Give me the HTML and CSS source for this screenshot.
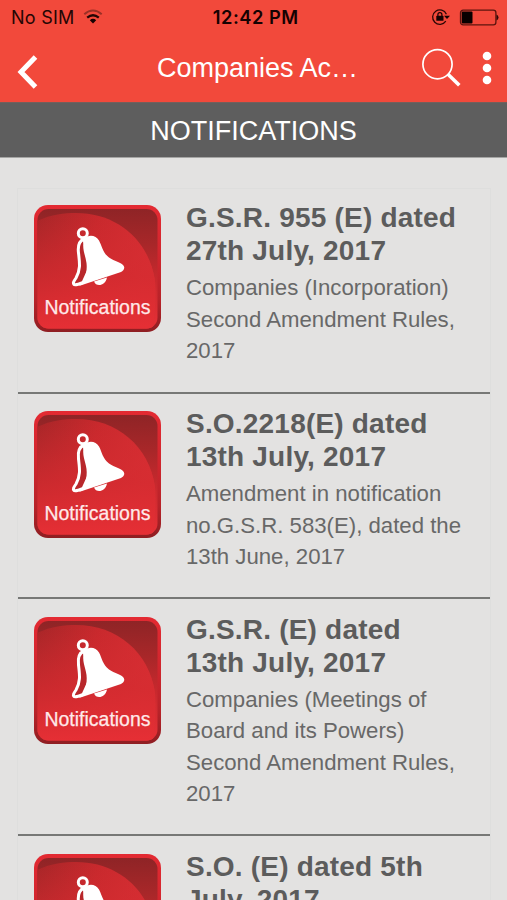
FILE: index.html
```html
<!DOCTYPE html>
<html lang="en">
<head>
<meta charset="utf-8">
<title>Notifications</title>
<link rel="stylesheet" href="styles.css">
</head>
<body>
<svg class="defs" width="0" height="0" aria-hidden="true">
  <defs>
    <linearGradient id="tile" x1="0" y1="0" x2="0" y2="1">
      <stop offset="0" stop-color="#8e2426"/>
      <stop offset=".3" stop-color="#a82729"/>
      <stop offset=".6" stop-color="#c9292e"/>
      <stop offset="1" stop-color="#e63036"/>
    </linearGradient>
    <linearGradient id="glow" x1="0" y1="0" x2="1" y2=".25">
      <stop offset="0" stop-color="#a62628"/>
      <stop offset=".5" stop-color="#c8292d"/>
      <stop offset="1" stop-color="#d62f34"/>
    </linearGradient>
    <linearGradient id="fade" x1="0" y1="0" x2="0" y2="1">
      <stop offset="0" stop-color="#d62b30" stop-opacity="0"/>
      <stop offset=".55" stop-color="#d62b30" stop-opacity=".7"/>
      <stop offset="1" stop-color="#e62f35" stop-opacity="1"/>
    </linearGradient>
    <linearGradient id="rim" x1="0" y1="0" x2="0" y2="1">
      <stop offset="0" stop-color="#e32a32"/>
      <stop offset=".35" stop-color="#d3262e"/>
      <stop offset=".75" stop-color="#b82329"/>
      <stop offset="1" stop-color="#8f1e22"/>
    </linearGradient>
    <clipPath id="inner"><rect x="3.5" y="4" width="120" height="119.5" rx="11"/></clipPath>
    <symbol id="bell" viewBox="0 0 127 127">
      <rect width="127" height="127" rx="14" fill="url(#rim)"/>
      <g clip-path="url(#inner)">
        <rect x="3" y="3" width="121" height="121" fill="url(#tile)"/>
        <path d="M3 16C18 9 30 8 42 8C83 8 115 35 121 76C122 92 121 108 119 124H3Z" fill="url(#glow)"/>
        <path d="M3 16C18 9 30 8 42 8C83 8 115 35 121 76C122 92 121 108 119 124H3Z" fill="url(#fade)"/>
      </g>
      <circle cx="48.8" cy="28.3" r="4.5" fill="none" stroke="#fff" stroke-width="3"/>
      <path d="M60 76.500C62 82 71 81.500 73 72.500Z" fill="#fff"/>
      <path d="M50 34C45 36 43.500 40 44.500 48C45.500 57 47 64 42 73C40 76 38.500 78 40 79.500C41.500 80.500 44 79.500 49 77.500L57 60Z" fill="#b8272b" stroke="#fff" stroke-width="3" stroke-linejoin="round"/>
      <path d="M50 34C55 28.500 62 30.500 65 35.500C68 41 68.500 47.500 75 52.500C80 56 89 58 90 61.500C91 64 89 66 87 67L45 81C51 75 53.500 67 52.500 58C51.500 50 47.500 44 50 34Z" fill="#fff"/>
      <text class="tile-label" x="63.500" y="108.500" text-anchor="middle" textLength="106" lengthAdjust="spacingAndGlyphs">Notifications</text>
    </symbol>
  </defs>
</svg>
<div class="screen">
  <header class="top">
    <div class="status">
      <div class="carrier"><span>No SIM</span>
        <svg width="20" height="16" viewBox="0 0 20 16" fill="none">
          <path d="M1.300 5.200Q10-2.200 18.700 5.200" stroke="#9b3026" stroke-width="2"/>
          <path d="M4.200 8.600Q10 3.800 15.800 8.600" stroke="#240604" stroke-width="2.300"/>
          <path d="M6.800 11.200Q10 8.500 13.200 11.200L10 14.600Z" fill="#160202"/>
        </svg>
      </div>
      <div class="clock">12:42 PM</div>
      <div class="indicators">
        <svg width="20" height="18" viewBox="0 0 20 18" fill="none">
          <path d="M14.800 13.200A7.200 7.200 0 1 1 15.400 6.200" stroke="#2d0705" stroke-width="1.300"/>
          <path d="M13 7.800H19L16 11Z" fill="#160202"/>
          <rect x="5.300" y="7.800" width="7.200" height="5" rx=".6" fill="#160202"/>
          <path d="M6.900 8V6.600a2 2 0 0 1 4 0V8" stroke="#160202" stroke-width="1.200"/>
        </svg>
        <svg width="40" height="17" viewBox="0 0 40 17" fill="none">
          <rect x="1.500" y="1.200" width="35.400" height="14.600" rx="2.600" stroke="#5c140e" stroke-width="1.300"/>
          <rect x="2.700" y="2.600" width="10.800" height="11.800" rx="1" fill="#080000"/>
          <path d="M37.500 5.400q2 1 2 3.100t-2 3.100Z" fill="#2d0705"/>
        </svg>
      </div>
    </div>
    <div class="nav">
      <svg class="back" width="22" height="36" viewBox="0 0 22 36" fill="none"><path d="M19.500 3L5 18L19.500 33" stroke="#fff" stroke-width="5"/></svg>
      <h1>Companies Ac…</h1>
      <div class="actions">
        <svg width="40" height="40" viewBox="0 0 40 40" fill="none" stroke="#fff">
          <circle cx="16.500" cy="16.200" r="14.600" stroke-width="1.700"/>
          <path d="M26.700 26L38.300 37.200" stroke-width="3.600"/>
        </svg>
        <svg width="10" height="34" viewBox="0 0 10 34" fill="#fff"><circle cx="5" cy="5" r="4.300"/><circle cx="5" cy="17" r="4.300"/><circle cx="5" cy="29" r="4.300"/></svg>
      </div>
    </div>
  </header>
  <div class="section">NOTIFICATIONS</div>
  <main class="list">
    <article class="item">
      <svg class="tile"><use href="#bell"/></svg>
      <div><h2>G.S.R. 955 (E) dated<br>27th July, 2017</h2>
      <p>Companies (Incorporation)<br>Second Amendment Rules,<br>2017</p></div>
    </article>
    <article class="item">
      <svg class="tile"><use href="#bell"/></svg>
      <div><h2>S.O.2218(E) dated<br>13th July, 2017</h2>
      <p>Amendment in notification<br>no.G.S.R. 583(E), dated the<br>13th June, 2017</p></div>
    </article>
    <article class="item">
      <svg class="tile"><use href="#bell"/></svg>
      <div><h2>G.S.R. (E) dated<br>13th July, 2017</h2>
      <p>Companies (Meetings of<br>Board and its Powers)<br>Second Amendment Rules,<br>2017</p></div>
    </article>
    <article class="item">
      <svg class="tile"><use href="#bell"/></svg>
      <div><h2>S.O. (E) dated 5th<br>July, 2017</h2></div>
    </article>
  </main>
</div>
</body>
</html>
```
FILE: styles.css
```css
* { box-sizing: border-box; }
body { margin: 0; font-family: "Liberation Sans", Arial, sans-serif; background: #e3e2e1; }
h1, h2, p { margin: 0; }
svg { display: block; flex: none; }
.defs { position: absolute; }
.screen { width: 507px; height: 900px; overflow: hidden; }
.top { height: 102px; background: #f2493b; }
.status {
  display: grid; grid-template-columns: 1fr auto 1fr; align-items: center;
  height: 34px; padding: 0 8.5px 0 11px;
  font-family: Inter, "Liberation Sans", sans-serif; font-size: 18px; color: #240604;
}
.carrier { display: flex; align-items: center; gap: 8px; letter-spacing: .25px; }
.carrier svg { margin-top: 0; }
.clock { font-weight: 600; font-size: 18.3px; letter-spacing: .5px; padding-left: 2px; color: #160202; }
.indicators { display: flex; justify-content: flex-end; align-items: center; gap: 8px; }
.nav {
  display: grid; grid-template-columns: 140px 1fr 90px; align-items: center;
  height: 68px; color: #fff;
}
.back { margin: 8px 0 0 16px; }
h1 { font-size: 27px; line-height: 32px; font-weight: 400; padding-left: 17px; white-space: nowrap; }
.actions { display: flex; align-items: center; gap: 21px; padding-left: 4px; }
.section {
  height: 56px; border-top: 1px solid #735f5c; border-bottom: 1px solid #a5a5a4; background: #5e5e5e; color: #fff;
  font-size: 27px; line-height: 57px; text-align: center;
}
.list { margin: 30px 16px 0 17px; border: 1px solid #dededd; border-bottom: 0; }
.item {
  display: flex; gap: 25px; height: 205.7px; padding: 16px 0 0 16px;
  border-bottom: 2px solid #777876;
}
.item:nth-child(3) { height: 237.3px; }
.item + .item { padding-top: 17.5px; }
.item:first-child { height: 204.5px; }
.tile { width: 127px; height: 127px; }
.tile-label { font-size: 20.5px; fill: #ffe9e9; stroke: #ffe9e9; stroke-width: .25px; }
h2 { margin-top: -4px; font-size: 28px; line-height: 33.4px; letter-spacing: .2px; color: #5c5c5c; white-space: nowrap; }
p { margin-top: 4.2px; font-size: 22.2px; line-height: 31.6px; color: #686868; white-space: nowrap; }
```
